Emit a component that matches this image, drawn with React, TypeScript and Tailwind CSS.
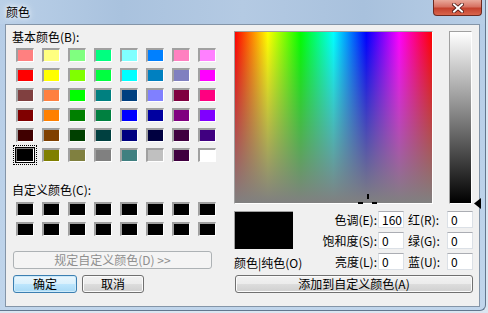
import React from "react";

const basic: string[][] = [
  ["#FF8080", "#FFFF80", "#80FF80", "#00FF80", "#80FFFF", "#0080FF", "#FF80C0", "#FF80FF"],
  ["#FF0000", "#FFFF00", "#80FF00", "#00FF40", "#00FFFF", "#0080C0", "#8080C0", "#FF00FF"],
  ["#804040", "#FF8040", "#00FF00", "#008080", "#004080", "#8080FF", "#800040", "#FF0080"],
  ["#800000", "#FF8000", "#008000", "#008040", "#0000FF", "#0000A0", "#800080", "#8000FF"],
  ["#400000", "#804000", "#004000", "#004040", "#000080", "#000040", "#400040", "#400080"],
  ["#000000", "#808000", "#808040", "#808080", "#408080", "#C0C0C0", "#400040", "#FFFFFF"],
];

function Swatch({ color, selected }: { color: string; selected?: boolean }) {
  if (selected) {
    return (
      <div className="relative w-[18px] h-[14px]">
        <div className="absolute -left-[3px] -top-[3px] -right-[3px] -bottom-[3px] border border-dotted border-black" />
        <div className="absolute -left-[1px] -top-[1px] -right-[1px] -bottom-[1px] border border-black">
          <div
            className="w-full h-full border border-t-[#808080] border-l-[#808080] border-b-white border-r-white"
            style={{ backgroundColor: color }}
          />
        </div>
      </div>
    );
  }
  return (
    <div
      className="w-[18px] h-[14px] border-t-2 border-l-2 border-b border-r border-t-[#a0a0a0] border-l-[#a0a0a0] border-b-white border-r-white"
      style={{ backgroundColor: color }}
    />
  );
}

function Field({ value }: { value: string }) {
  return (
    <div className="h-[17px] w-[26px] bg-white border border-[#dbe0e6] border-t-[#abadb3] pl-[3px] leading-[15px] text-[12px]">
      {value}
    </div>
  );
}

export default function App() {
  return (
    <div className="w-[488px] h-[313px] bg-[#dbe6f1] font-['Noto_Sans_CJK_SC',sans-serif] text-[12px] leading-[14px] text-black overflow-hidden">
      <div className="w-[486px] h-[311px] flex flex-col bg-[linear-gradient(to_bottom,#b5cce6,#c0d5eb)] border-r border-b border-[#62778e] rounded-br-[6px]">
        {/* title bar */}
        <div className="h-[24px] shrink-0 flex items-start bg-[linear-gradient(to_right,#bad0e8,#a9c2de_25%,#b4cae3_50%,#a8c1dd_75%,#b8cee6)]">
          <span className="pl-[6px] pt-[5px] text-[12px] leading-[14px] [text-shadow:0_0_4px_#fff,0_0_8px_#fff]">颜色</span>
          <div className="ml-auto mr-[3px] w-[49px] h-[16px] rounded-b-[4px] border border-t-0 border-[#6d2a21] bg-[linear-gradient(to_bottom,#e9a99b,#d77262_45%,#c4412d_55%,#d9654c)] flex items-center justify-center">
            <svg width="12" height="10" viewBox="0 0 12 10">
              <path d="M2 1.5 L10 8.5 M10 1.5 L2 8.5" stroke="#4a1510" strokeWidth="3.6" strokeLinecap="square" />
              <path d="M2 1.5 L10 8.5 M10 1.5 L2 8.5" stroke="#ffffff" strokeWidth="2" strokeLinecap="square" />
            </svg>
          </div>
        </div>

        {/* client area */}
        <div className="ml-[5px] w-[475px] h-[283px] border border-[#8495a8] bg-[#f0f0f0] flex">
          {/* left column */}
          <div className="w-[228px] flex flex-col">
            <div className="ml-[6px] mt-[5px] h-[14px]">基本颜色(B):</div>
            <div className="ml-[10px] mt-[4px] grid grid-cols-[repeat(8,18px)] gap-x-[8px] gap-y-[6px]">
              {basic.flatMap((row, r) =>
                row.map((c, i) => <Swatch key={`${r}-${i}`} color={c} selected={r === 5 && i === 0} />)
              )}
            </div>
            <div className="ml-[6px] mt-[21px] h-[14px]">自定义颜色(C):</div>
            <div className="ml-[10px] mt-[5px] grid grid-cols-[repeat(8,18px)] gap-x-[8px] gap-y-[6px]">
              {Array.from({ length: 16 }).map((_, i) => (
                <Swatch key={i} color="#000000" />
              ))}
            </div>
            <div className="ml-[7px] mt-[15px] w-[199px] h-[18px] border border-[#adb2b5] rounded-[3px] bg-[#f4f4f4] text-[#8f8f8f] flex items-center justify-center">
              规定自定义颜色(D) &gt;&gt;
            </div>
            <div className="ml-[7px] mt-[6px] flex gap-[5px]">
              <div className="w-[64px] h-[18px] border border-[#3c7fb1] rounded-[3px] bg-[linear-gradient(to_bottom,#eaf6fd,#d9f0fc_50%,#bee6fd_50%,#a7d9f5)] flex items-center justify-center shadow-[inset_0_0_0_1px_#cdeafa]">
                确定
              </div>
              <div className="w-[62px] h-[18px] border border-[#707070] rounded-[3px] bg-[linear-gradient(to_bottom,#f2f2f2,#ebebeb_50%,#dddddd_50%,#cfcfcf)] flex items-center justify-center shadow-[inset_0_0_0_1px_#fbfbfb]">
                取消
              </div>
            </div>
          </div>

          {/* right column */}
          <div className="w-[239px] flex flex-col">
            <div className="mt-[6px] flex">
              <div className="relative w-[199px] h-[173px] border-t border-l border-b border-r border-t-[#a0a0a0] border-l-[#a0a0a0] border-b-white border-r-white bg-[linear-gradient(to_right,#ff0000,#ffff00,#00ff00,#00ffff,#0000ff,#ff00ff,#ff0000)]">
                <div className="absolute inset-0 bg-[linear-gradient(to_bottom,rgba(128,128,128,0),#808080)]" />
                <div className="absolute left-[132px] top-[162px] w-[2px] h-[5px] bg-black" />
                <div className="absolute left-[123px] top-[170px] w-[5px] h-[2px] bg-black" />
                <div className="absolute left-[137px] top-[170px] w-[5px] h-[2px] bg-black" />
              </div>
              <div className="relative ml-[16px] w-[23px] h-[173px] border border-t-[#a0a0a0] border-l-[#a0a0a0] border-b-white border-r-white bg-[linear-gradient(to_bottom,#ffffff,#808080_50%,#000000)]">
                <svg className="absolute left-[24px] -bottom-[6px]" width="7" height="11" viewBox="0 0 7 11">
                  <polygon points="0,5.5 7,0 7,11" fill="#000" />
                </svg>
              </div>
            </div>

            <div className="mt-[7px] flex">
              <div className="w-[66px] flex flex-col">
                <div className="w-[59px] h-[38px] bg-black border-t border-l border-t-[#a0a0a0] border-l-[#a0a0a0]" />
                <div className="mt-[7px] whitespace-nowrap">颜色|纯色(O)</div>
              </div>
              <div className="grid grid-cols-[78px_26px_43px_26px] grid-rows-[17px_17px_17px] gap-y-[4px] items-center">
                <div className="text-right pr-[1px] whitespace-nowrap">色调(E):</div>
                <Field value="160" />
                <div className="pl-[4px] whitespace-nowrap">红(R):</div>
                <Field value="0" />
                <div className="text-right pr-[1px] whitespace-nowrap">饱和度(S):</div>
                <Field value="0" />
                <div className="pl-[4px] whitespace-nowrap">绿(G):</div>
                <Field value="0" />
                <div className="text-right pr-[1px] whitespace-nowrap">亮度(L):</div>
                <Field value="0" />
                <div className="pl-[4px] whitespace-nowrap">蓝(U):</div>
                <Field value="0" />
              </div>
            </div>

            <div className="ml-[1px] mt-[5px] w-[238px] h-[18px] border border-[#707070] rounded-[3px] bg-[linear-gradient(to_bottom,#f2f2f2,#ebebeb_50%,#dddddd_50%,#cfcfcf)] flex items-center justify-center shadow-[inset_0_0_0_1px_#fbfbfb]">
              添加到自定义颜色(A)
            </div>
          </div>
        </div>
      </div>
    </div>
  );
}
